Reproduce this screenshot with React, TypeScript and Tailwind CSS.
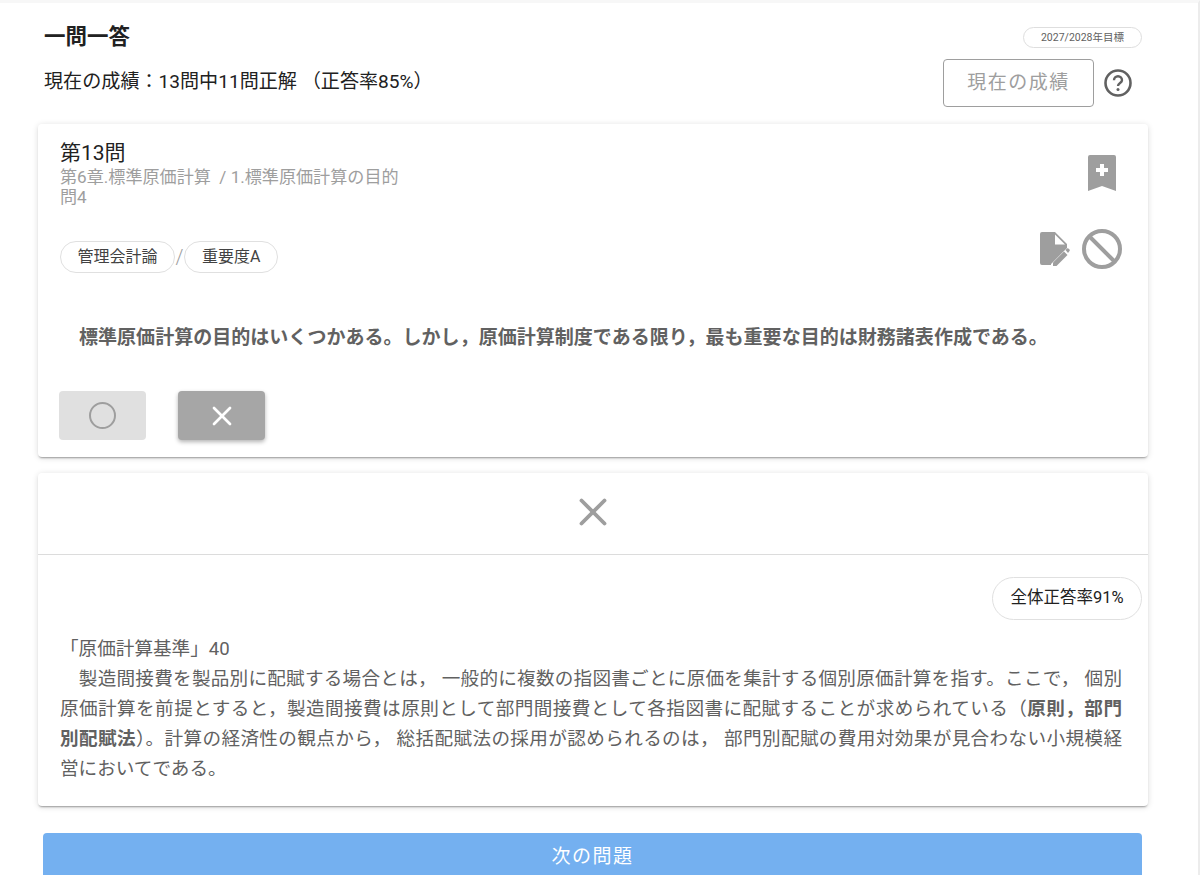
import { X } from "lucide-react"

function BookmarkPlus() {
  return (
    <svg viewBox="0 0 28 36" className="w-[28px] h-[36px]" fill="#9e9e9e">
      <path d="M2 0h24a2 2 0 0 1 2 2v34l-14-5-14 5V2a2 2 0 0 1 2-2z" />
      <path d="M12 9h4v4h4v4h-4v4h-4v-4H8v-4h4z" fill="#fff" />
    </svg>
  )
}

function NoteEdit() {
  return (
    <svg viewBox="0 0 30 36" className="w-[30px] h-[36px]" fill="#9e9e9e">
      <path d="M2 1h13l12 12v4L11 33v1H2a2 2 0 0 1-2-2V3a2 2 0 0 1 2-2z" />
      <path d="M15 3.500V13.500h10z" fill="#fff" />
      <path d="M13 35v-3.500L24 20.500l3.500 3.500L16.500 35z" />
      <path d="M25.500 19l1.500-1.500a1 1 0 0 1 1.400 0l1.100 1.100a1 1 0 0 1 0 1.400L28 22z" />
    </svg>
  )
}

function NoEntry() {
  return (
    <svg viewBox="0 0 40 40" className="w-[40px] h-[40px]" fill="none" stroke="#9e9e9e" strokeWidth="4">
      <circle cx="20" cy="20" r="18" />
      <path d="M7.500 7.500l25 25" />
    </svg>
  )
}

function HelpCircle() {
  return (
    <svg viewBox="0 0 28 28" className="w-[28px] h-[28px]" fill="none" stroke="#616161">
      <circle cx="14" cy="14" r="12.500" strokeWidth="2.600" />
      <path d="M10 11.200a4 4 0 0 1 8 0c0 2.700-4 2.800-4 5.800" strokeWidth="2.400" />
      <circle cx="14" cy="20.500" r="1.500" fill="#616161" stroke="none" />
    </svg>
  )
}

export default function App() {
  return (
    <div className="h-[875px] overflow-hidden bg-white border-t-[3px] border-t-[#f7f7f7] border-r-[2px] border-r-[#ececec] font-['Roboto','Noto_Sans_CJK_JP',sans-serif] text-[#212121]">
      <div className="w-[1148px] pl-[38px]">
        <header className="pl-[6px] pr-[6px] pt-[21px]">
          <div className="flex justify-between items-start h-[27px]">
            <h1 className="-mt-px text-[21.500px] leading-[27px] font-bold">一問一答</h1>
            <span className="mt-[3px] w-[119px] h-[21px] flex items-center justify-center rounded-full border border-[#dedede] text-[10.500px] text-[#616161]">2027/2028年目標</span>
          </div>
          <div className="flex justify-between items-center mt-[8px] h-[48px]">
            <p className="text-[19.100px] leading-[28px] -mt-[2px]">現在の成績：13問中11問正解 （正答率85%）</p>
            <div className="flex items-center gap-[10px] pr-[10px]">
              <button className="w-[151px] h-[48px] pt-px rounded-[4px] border border-[#9e9e9e] text-[19px] tracking-[1.500px] text-[#9e9e9e]">現在の成績</button>
              <HelpCircle />
            </div>
          </div>
        </header>

        <section className="mt-[17px] h-[333px] rounded-[4px] bg-white shadow-[0_2px_2px_-1px_rgba(0,0,0,0.35),0_1px_6px_rgba(0,0,0,0.14)] pl-[22px] pr-[25px] pt-[16px]">
          <div className="flex justify-between items-start h-[70px]">
            <div>
              <h2 className="text-[21px] leading-[26px]">第13問</h2>
              <p className="mt-[1px] text-[17.100px] leading-[20px] text-[#9e9e9e]">第6章.標準原価計算 &nbsp;/ 1.標準原価計算の目的</p>
              <p className="text-[17.100px] leading-[20px] text-[#9e9e9e]">問4</p>
            </div>
            <div className="mt-[15px] mr-[7px]"><BookmarkPlus /></div>
          </div>
          <div className="flex justify-between items-center mt-[25px] h-[44px]">
            <div className="flex items-center text-[16px] text-[#424242]">
              <span className="h-[32px] px-[16.500px] flex items-center rounded-full border border-[#e0e0e0]">管理会計論</span>
              <span className="w-[9px] text-center text-[#9e9e9e] text-[20px] font-light">/</span>
              <span className="h-[32px] px-[17px] flex items-center rounded-full border border-[#e0e0e0]">重要度A</span>
            </div>
            <div className="flex items-center gap-[12px] -mt-[16px] mr-px">
              <NoteEdit />
              <NoEntry />
            </div>
          </div>
          <p className="mt-[46px] pl-[19px] text-[19.050px] leading-[26px] font-bold text-[#616161]">標準原価計算の目的はいくつかある。しかし，原価計算制度である限り，最も重要な目的は財務諸表作成である。</p>
          <div className="flex gap-[32px] mt-[40px] -ml-px">
            <button className="w-[87px] h-[49px] rounded-[4px] bg-[#e0e0e0] flex items-center justify-center">
              <span className="w-[27px] h-[27px] rounded-full border-[2.500px] border-[#9e9e9e]" />
            </button>
            <button className="w-[87px] h-[49px] rounded-[4px] bg-[#a6a6a6] shadow-[0_2px_4px_rgba(0,0,0,0.3)] flex items-center justify-center">
              <X size={32} color="#fff" strokeWidth={2} />
            </button>
          </div>
        </section>

        <section className="mt-[16px] h-[333px] rounded-[4px] bg-white shadow-[0_2px_2px_-1px_rgba(0,0,0,0.35),0_1px_6px_rgba(0,0,0,0.14)]">
          <div className="h-[82px] pb-[3px] flex items-center justify-center border-b border-[#dcdcdc]">
            <X size={46} color="#9e9e9e" strokeWidth={2} />
          </div>
          <div className="pl-[22px] pr-[6px] pt-[22px]">
            <div className="flex justify-end">
              <span className="w-[150px] h-[43px] flex items-center justify-center rounded-full border border-[#e0e0e0] text-[16.500px] text-[#212121]">全体正答率91%</span>
            </div>
            <div className="mt-[14px] pr-[20px] text-[18.600px] leading-[30px] text-[#616161]">
              <p>「原価計算基準」40</p>
              <p>
                <span className="block [text-align:justify] [text-align-last:justify]">　製造間接費を製品別に配賦する場合とは， 一般的に複数の指図書ごとに原価を集計する個別原価計算を指す。ここで， 個別</span>
                <span className="block [text-align:justify] [text-align-last:justify]">原価計算を前提とすると，製造間接費は原則として部門間接費として各指図書に配賦することが求められている（<b>原則，部門</b></span>
                <span className="block [text-align:justify] [text-align-last:justify]"><b>別配賦法</b>）。計算の経済性の観点から， 総括配賦法の採用が認められるのは， 部門別配賦の費用対効果が見合わない小規模経</span>
                <span className="block">営においてである。</span>
              </p>
            </div>
          </div>
        </section>

        <div className="pl-[5px] pr-[6px] mt-[27px]">
          <button className="w-full h-[48px] pt-px rounded-[4px] bg-[#74b0f0] text-white text-[19px] tracking-[1.500px]">次の問題</button>
        </div>
      </div>
    </div>
  )
}
